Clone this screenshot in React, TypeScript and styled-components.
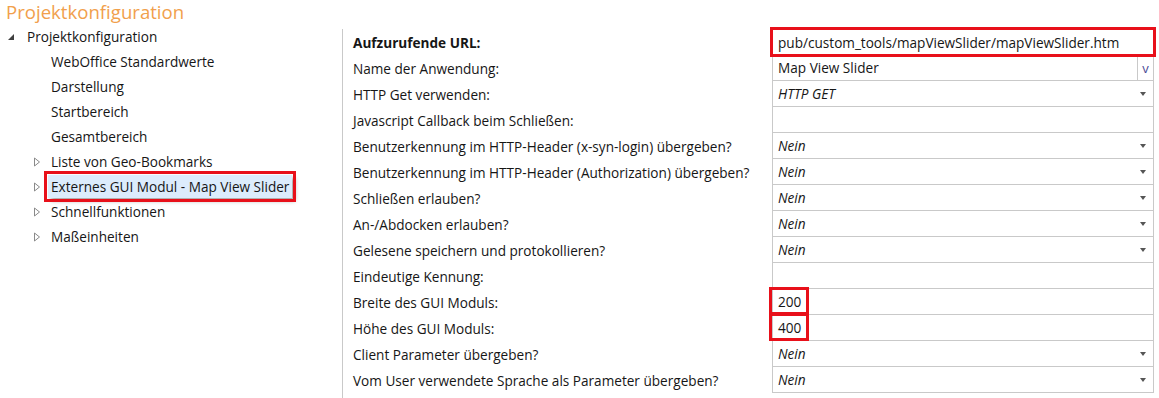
import React from 'react'
import styled, { createGlobalStyle } from 'styled-components'

const GlobalStyle = createGlobalStyle`
  html, body {
    margin: 0;
    padding: 0;
    background: #ffffff;
  }
  body {
    font-family: 'Open Sans', 'Noto Sans', sans-serif;
    font-size: 13.6px;
    color: #161616;
  }
`

const Page = styled.div`
  width: 1159px;
  height: 398px;
  overflow: hidden;
  display: flex;
  flex-direction: column;
`

const Title = styled.h1`
  margin: 0;
  height: 26px;
  padding-left: 6px;
  font-size: 18.6px;
  font-weight: 400;
  line-height: 24px;
  color: #f1a04c;
`

const Main = styled.div`
  flex: 1;
  display: flex;
  min-height: 0;
`

const Tree = styled.ul`
  list-style: none;
  margin: -2px 0 0;
  padding: 0;
  width: 342px;
  flex-shrink: 0;
`

const TreeRow = styled.li<{ level: number }>`
  height: 25px;
  display: flex;
  align-items: center;
  padding-left: ${(p) => (p.level === 0 ? 7 : 33)}px;
`

const Toggle = styled.span<{ wide?: boolean }>`
  width: ${(p) => (p.wide ? 20 : 18)}px;
  display: flex;
  align-items: center;
  flex-shrink: 0;
`

const TreeLabel = styled.span<{ selected?: boolean }>`
  white-space: nowrap;
  padding: 2px 3px;
  margin-left: -3px;
  ${(p) =>
    p.selected &&
    `
    background: #dcecfc;
    outline: 3px solid #e8101a;
    outline-offset: 1px;
    box-shadow: 3px 3px 4px rgba(0, 0, 0, 0.35);
  `}
`

const Props = styled.div`
  flex: 1;
  border-left: 1px solid #c9c9c9;
  margin-top: 3px;
  display: grid;
  grid-template-columns: 429px 382px;
  grid-auto-rows: 26px;
  align-content: start;
`

const Label = styled.div<{ strong?: boolean }>`
  display: flex;
  align-items: center;
  padding-left: 10px;
  font-weight: ${(p) => (p.strong ? 700 : 400)};
  white-space: nowrap;
`

const Cell = styled.div<{ marked?: boolean }>`
  position: relative;
  display: flex;
  align-items: center;
  border: 1px solid #c9c9c9;
  border-top: none;
  padding-left: 5px;
  &:nth-child(2) {
    border-top: 1px solid #c9c9c9;
  }
  ${(p) =>
    p.marked &&
    `
    outline: 3px solid #e8101a;
    outline-offset: -1px;
    z-index: 1;
  `}
`

const Value = styled.span<{ italic?: boolean }>`
  flex: 1;
  font-style: ${(p) => (p.italic ? 'italic' : 'normal')};
  white-space: nowrap;
`

const Arrow = styled.span`
  width: 0;
  height: 0;
  margin-right: 7px;
  border-left: 3.5px solid transparent;
  border-right: 3.5px solid transparent;
  border-top: 4px solid #555555;
`

const PickButton = styled.span`
  width: 15px;
  align-self: stretch;
  display: flex;
  align-items: center;
  justify-content: center;
  border-left: 1px solid #c9c9c9;
  color: #4b4b96;
  font-size: 13px;
`

const Mark = styled.span`
  position: absolute;
  left: -1px;
  top: 1px;
  width: 34px;
  height: 22px;
  outline: 3px solid #e8101a;
  outline-offset: 0;
  z-index: 1;
  pointer-events: none;
`

const Filled = () => (
  <svg width="8" height="8" viewBox="0 0 8 8">
    <path d="M7 1 L7 7 L1 7 Z" fill="#404040" />
  </svg>
)

const Outline = () => (
  <svg width="8" height="10" viewBox="0 0 8 10">
    <path d="M1.5 1 L6.5 5 L1.5 9 Z" fill="none" stroke="#8a8a8a" strokeWidth="1" />
  </svg>
)

type Row = {
  label: string
  value?: string
  kind?: 'text' | 'select' | 'pick'
  strong?: boolean
  marked?: 'cell' | 'num'
}

const rows: Row[] = [
  { label: 'Aufzurufende URL:', value: 'pub/custom_tools/mapViewSlider/mapViewSlider.htm', strong: true, marked: 'cell' },
  { label: 'Name der Anwendung:', value: 'Map View Slider', kind: 'pick' },
  { label: 'HTTP Get verwenden:', value: 'HTTP GET', kind: 'select' },
  { label: 'Javascript Callback beim Schließen:' },
  { label: 'Benutzerkennung im HTTP-Header (x-syn-login) übergeben?', value: 'Nein', kind: 'select' },
  { label: 'Benutzerkennung im HTTP-Header (Authorization) übergeben?', value: 'Nein', kind: 'select' },
  { label: 'Schließen erlauben?', value: 'Nein', kind: 'select' },
  { label: 'An-/Abdocken erlauben?', value: 'Nein', kind: 'select' },
  { label: 'Gelesene speichern und protokollieren?', value: 'Nein', kind: 'select' },
  { label: 'Eindeutige Kennung:' },
  { label: 'Breite des GUI Moduls:', value: '200', marked: 'num' },
  { label: 'Höhe des GUI Moduls:', value: '400', marked: 'num' },
  { label: 'Client Parameter übergeben?', value: 'Nein', kind: 'select' },
  { label: 'Vom User verwendete Sprache als Parameter übergeben?', value: 'Nein', kind: 'select' },
]

const children = [
  { name: 'WebOffice Standardwerte' },
  { name: 'Darstellung' },
  { name: 'Startbereich' },
  { name: 'Gesamtbereich' },
  { name: 'Liste von Geo-Bookmarks', sub: true },
  { name: 'Externes GUI Modul - Map View Slider', sub: true, selected: true },
  { name: 'Schnellfunktionen', sub: true },
  { name: 'Maßeinheiten', sub: true },
]

const App = () => (
  <Page>
    <GlobalStyle />
    <Title>Projektkonfiguration</Title>
    <Main>
      <Tree>
        <TreeRow level={0}>
          <Toggle wide>
            <Filled />
          </Toggle>
          <TreeLabel>Projektkonfiguration</TreeLabel>
        </TreeRow>
        {children.map((c) => (
          <TreeRow level={1} key={c.name}>
            <Toggle>{c.sub && <Outline />}</Toggle>
            <TreeLabel selected={c.selected}>{c.name}</TreeLabel>
          </TreeRow>
        ))}
      </Tree>
      <Props>
        {rows.map((r) => (
          <React.Fragment key={r.label}>
            <Label strong={r.strong}>{r.label}</Label>
            <Cell marked={r.marked === 'cell'}>
              {r.marked === 'num' && <Mark />}
              <Value italic={r.kind === 'select'}>{r.value}</Value>
              {r.kind === 'select' && <Arrow />}
              {r.kind === 'pick' && <PickButton>v</PickButton>}
            </Cell>
          </React.Fragment>
        ))}
      </Props>
    </Main>
  </Page>
)

export default App
